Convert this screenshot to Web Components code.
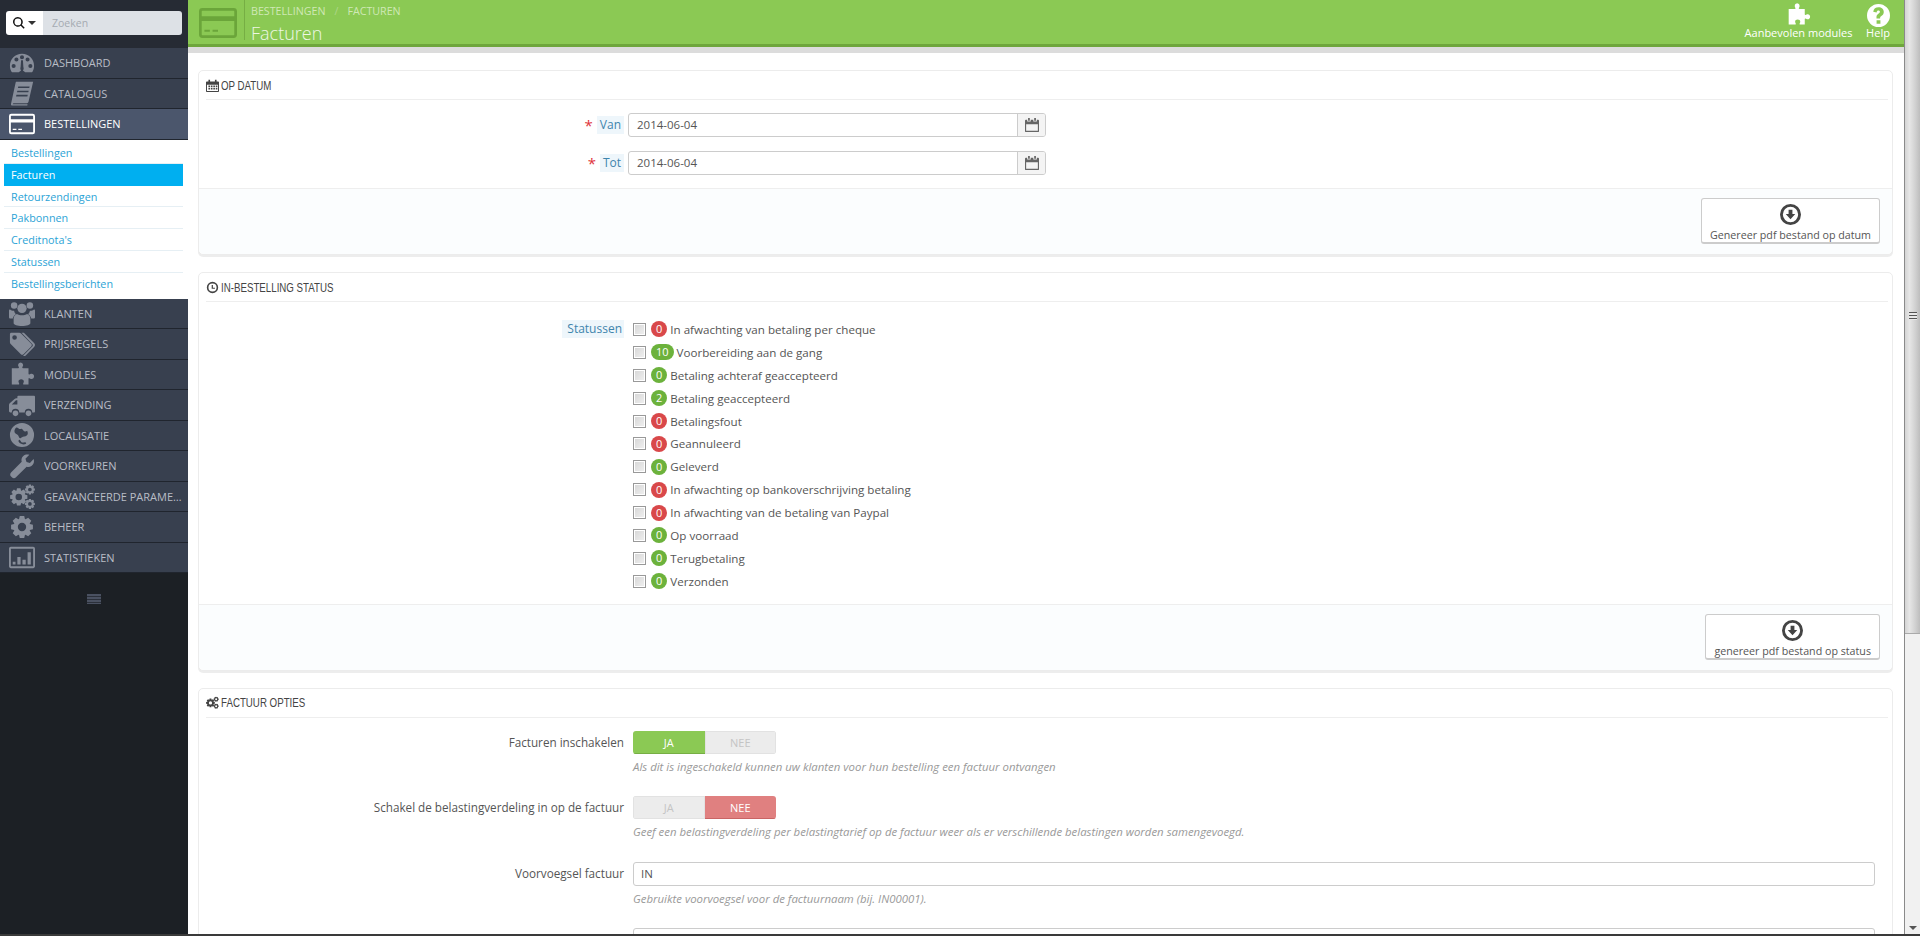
<!DOCTYPE html>
<html lang="nl">
<head>
<meta charset="utf-8">
<title>Facturen</title>
<style>
  html, body { margin: 0; height: 936px; overflow: hidden; background: #fff; }
  body { font-family: "Open Sans", "Liberation Sans", sans-serif; font-size: 12px; color: #555; }
  ps-page { height: 936px; }
</style>
</head>
<body>
<ps-page>
  <ps-sidebar slot="side">
    <ps-menu-item icon="dashboard">Dashboard</ps-menu-item>
    <ps-menu-item icon="book">Catalogus</ps-menu-item>
    <ps-menu-item icon="card" active>Bestellingen</ps-menu-item>
    <ps-submenu>
      <ps-sub-item>Bestellingen</ps-sub-item>
      <ps-sub-item active>Facturen</ps-sub-item>
      <ps-sub-item>Retourzendingen</ps-sub-item>
      <ps-sub-item>Pakbonnen</ps-sub-item>
      <ps-sub-item>Creditnota's</ps-sub-item>
      <ps-sub-item>Statussen</ps-sub-item>
      <ps-sub-item last>Bestellingsberichten</ps-sub-item>
    </ps-submenu>
    <ps-menu-item icon="users">Klanten</ps-menu-item>
    <ps-menu-item icon="tags">Prijsregels</ps-menu-item>
    <ps-menu-item icon="puzzle">Modules</ps-menu-item>
    <ps-menu-item icon="truck">Verzending</ps-menu-item>
    <ps-menu-item icon="globe">Localisatie</ps-menu-item>
    <ps-menu-item icon="wrench">Voorkeuren</ps-menu-item>
    <ps-menu-item icon="gears">Geavanceerde parameters</ps-menu-item>
    <ps-menu-item icon="gear">Beheer</ps-menu-item>
    <ps-menu-item icon="chart">Statistieken</ps-menu-item>
  </ps-sidebar>

  <ps-header></ps-header>

  <ps-panel heading="Op datum" icon="calendar" footer>
    <ps-date-row label="Van" value="2014-06-04"></ps-date-row>
    <ps-date-row label="Tot" value="2014-06-04" style="margin-top:14px"></ps-date-row>
    <ps-button slot="footer">Genereer pdf bestand op datum</ps-button>
  </ps-panel>

  <ps-panel heading="In-bestelling status" icon="clock" footer>
    <ps-status-list>
      <ps-status n="0" tone="red">In afwachting van betaling per cheque</ps-status>
      <ps-status n="10" tone="green">Voorbereiding aan de gang</ps-status>
      <ps-status n="0" tone="green">Betaling achteraf geaccepteerd</ps-status>
      <ps-status n="2" tone="green">Betaling geaccepteerd</ps-status>
      <ps-status n="0" tone="red">Betalingsfout</ps-status>
      <ps-status n="0" tone="red">Geannuleerd</ps-status>
      <ps-status n="0" tone="green">Geleverd</ps-status>
      <ps-status n="0" tone="red">In afwachting op bankoverschrijving betaling</ps-status>
      <ps-status n="0" tone="red">In afwachting van de betaling van Paypal</ps-status>
      <ps-status n="0" tone="green">Op voorraad</ps-status>
      <ps-status n="0" tone="green">Terugbetaling</ps-status>
      <ps-status n="0" tone="green">Verzonden</ps-status>
    </ps-status-list>
    <ps-button slot="footer">genereer pdf bestand op status</ps-button>
  </ps-panel>

  <ps-panel heading="Factuur opties" icon="cogs">
    <ps-form-row label="Facturen inschakelen" help="Als dit is ingeschakeld kunnen uw klanten voor hun bestelling een factuur ontvangen">
      <ps-switch value="yes"></ps-switch>
    </ps-form-row>
    <ps-form-row label="Schakel de belastingverdeling in op de factuur" help="Geef een belastingverdeling per belastingtarief op de factuur weer als er verschillende belastingen worden samengevoegd.">
      <ps-switch value="no"></ps-switch>
    </ps-form-row>
    <ps-form-row label="Voorvoegsel factuur" help="Gebruikte voorvoegsel voor de factuurnaam (bij. IN00001).">
      <ps-text-input value="IN"></ps-text-input>
    </ps-form-row>
    <ps-form-row label="">
      <ps-text-input value=""></ps-text-input>
    </ps-form-row>
  </ps-panel>
</ps-page>

<script>
// gear outline as a path, teeth alternate between outer and inner radius
function gearPath(cx, cy, r, teeth, hole) {
  let d = '';
  const step = Math.PI * 2 / teeth;
  for (let i = 0; i < teeth; i++) {
    const a = i * step;
    const pts = [[-.30, r * .76], [-.17, r], [.17, r], [.30, r * .76]];
    pts.forEach((p, j) => {
      const t = a + p[0] * step * 1.5;
      d += (i === 0 && j === 0 ? 'M' : 'L') + (cx + Math.cos(t) * p[1]).toFixed(2) + ' ' + (cy + Math.sin(t) * p[1]).toFixed(2);
    });
  }
  d += 'Z';
  d += `M${cx - hole} ${cy}a${hole} ${hole} 0 1 0 ${hole * 2} 0a${hole} ${hole} 0 1 0 ${-hole * 2} 0Z`;
  return d;
}

const PUZZLE = 'M12 1.500c2 0 3.200 1.300 3.200 2.900 0 1-.6 1.700-.9 2.500-.1.500.2.800.9.800H21v6c0 .7.400 1 .9.800.8-.3 1.400-.9 2.400-.9 1.600 0 2.700 1.200 2.700 2.900s-1.100 2.900-2.700 2.900c-1 0-1.600-.6-2.400-.9-.5-.2-.9.100-.9.800v6h-5c-.7 0-1-.4-.8-.9.3-.8.800-1.400.800-2.300 0-1.500-1.200-2.500-2.900-2.500s-2.900 1-2.900 2.500c0 .9.500 1.500.8 2.300.2.500-.1.900-.8.900H3V7.700h6.800c.7 0 1-.3.900-.8-.3-.8-.9-1.500-.9-2.500 0-1.600 1.200-2.900 3.200-2.900z';

const ICONS = {
  dashboard: `<path fill-rule="evenodd" d="M14 4C6.600 4 1 9.700 1 17c0 2.400.6 4.500 1.700 6.300.3.400.7.700 1.300.700h6.500l2.500-2c-.5-.5-.8-1.200-.8-2 0-.5.1-.9.3-1.300L13 11h2l.5 7.700c.2.400.3.800.3 1.300 0 .8-.3 1.500-.8 2l2.500 2H24c.6 0 1-.3 1.300-.7C26.400 21.500 27 19.400 27 17 27 9.700 21.400 4 14 4zM5 19.500a2.200 2.200 0 1 1 0-4.400 2.200 2.200 0 0 1 0 4.400zM8 12.500a2.200 2.200 0 1 1 0-4.400 2.200 2.200 0 0 1 0 4.400zM14 10a2.200 2.200 0 1 1 0-4.400A2.200 2.200 0 0 1 14 10zM20 12.500a2.200 2.200 0 1 1 0-4.400 2.200 2.200 0 0 1 0 4.400zM23 19.500a2.200 2.200 0 1 1 0-4.400 2.200 2.200 0 0 1 0 4.400z"/>`,
  book: `<path fill-rule="evenodd" d="M8 2h18l-5 21.500c-.2.900-.8 1.500-1.700 1.500H5.500c-.9 0-1.400.5-1.400 1H20l-.3 1.500H3.500C2.400 27.500 2 26.700 2.200 25.500L7 3.500C7.200 2.600 7.400 2 8 2zm2 5l-.4 1.700h12.200L22.200 7zm-1 4.500l-.4 1.700h12.200l.4-1.700zm-1 4.500l-.4 1.700h12.200l.4-1.700z"/>`,
  card: `<path fill-rule="evenodd" d="M2.500 3h23A2.500 2.500 0 0 1 28 5.500v17a2.500 2.500 0 0 1-2.500 2.500h-23A2.500 2.500 0 0 1 0 22.500v-17A2.500 2.500 0 0 1 2.500 3zM2 5.600V9h24V5.600c0-.4-.2-.6-.6-.6H2.600c-.4 0-.6.2-.6.600zM2 12.500v10c0 .3.200.5.500.5h23c.3 0 .5-.2.500-.5v-10zM4 19h4v1.500H4zm6 0h4v1.500h-4z"/>`,
  users: `<circle cx="5.500" cy="6" r="3.500"/><circle cx="22.500" cy="6" r="3.500"/><circle cx="14" cy="9" r="5"/><path d="M0 11.500c0-1 .8-1.500 1.500-1 .9.8 2.500 1.300 4 1.100.2 1.500 1 2.800 2 3.700-1.900 1-3.200 2.900-3.400 4.700H1.500C.6 20 0 19.400 0 18.500zM28 11.500c0-1-.8-1.500-1.500-1-.9.8-2.500 1.300-4 1.100-.2 1.500-1 2.800-2 3.700 1.900 1 3.200 2.900 3.400 4.700h2.600c.9 0 1.500-.6 1.500-1.500z"/><path d="M8.500 15c1.400 1 3.500 1.500 5.500 1.500s4.100-.5 5.500-1.500c2 .6 3.500 2.500 3.500 5v5c0 1.500-4 3-9 3s-9-1.500-9-3v-5c0-2.500 1.500-4.400 3.500-5z"/>`,
  tags: `<path fill-rule="evenodd" d="M1 3.500C1 2.700 1.700 2 2.500 2H11c.8 0 1.500.3 2 .8l11 11c.8.8.8 2 0 2.800L15.600 25c-.8.8-2 .8-2.800 0l-11-11c-.5-.5-.8-1.200-.8-2zM6 9.500a2.500 2.500 0 1 0 0-5 2.500 2.500 0 0 0 0 5z"/><path d="M16 2l11 11c1.300 1.300 1.300 3 0 4.300L18 26.300c-.8.800-2 .9-2.800.3L25 16.800c.8-.8.8-2 0-2.800L13.500 2z"/>`,
  puzzle: `<path d="${PUZZLE}"/>`,
  truck: `<path fill-rule="evenodd" d="M10 4h17c.6 0 1 .4 1 1v16c0 .6-.4 1-1 1h-2a4 4 0 0 0-8 0h-6a4 4 0 0 0-8 0H1.500C.7 22 0 21.300 0 20.500V14c0-.8.3-1.500.8-2L6 7.500c.5-.5 1.200-.8 2-.8h1V5c0-.6.4-1 1-1zM3 13.500h6V9H7.500z"/><circle cx="7" cy="23" r="3"/><circle cx="21" cy="23" r="3"/>`,
  globe: `<path fill-rule="evenodd" d="M14 1a13 13 0 1 1 0 26 13 13 0 0 1 0-26zM8 6c-1.500 1-2.500 3-2 5 .5 1.500 2 1.500 3.500 3 1 1 1 3 2.500 3.500 1 .3 1.500-1 3-1.500 2-.5 4-.5 5-2.500.6-1.500 0-3-.5-4-1 .8-2 1-3 .5S15 8 14 7.500c-1-.6-2 .5-3 0S9 5.500 8 6zM11 19c-1 .5-1 2 0 3s4 2.500 6 2c1.500-.4 2-1.500 1-2-1.500-.5-3 .5-4 0s-2-3-3-3z"/>`,
  wrench: `<path d="M26.500 6.500c.5 1.500.6 3 0 4.500-1.200 3-4.500 4.600-7.500 3.700L7.500 26.200c-1.200 1.200-3.200 1.200-4.400 0l-.9-.9c-1.200-1.200-1.200-3.200 0-4.400L13.700 9.400C12.800 6.400 14.400 3 17.400 1.900c1.500-.6 3-.5 4.500 0l-4.200 4.200 1.200 3.600 3.600 1.200z"/>`,
  gears: `<path fill-rule="evenodd" d="${gearPath(10.5, 15, 9.5, 8, 3.5)}"/><path fill-rule="evenodd" d="${gearPath(22.5, 7, 5.5, 8, 2)}"/><path fill-rule="evenodd" d="${gearPath(22.5, 22.5, 5.5, 8, 2)}"/>`,
  gear: `<path fill-rule="evenodd" d="${gearPath(14, 14, 12, 8, 4.5)}"/>`,
  chart: `<path fill-rule="evenodd" d="M2 3h24c1.100 0 2 .9 2 2v19c0 1.100-.9 2-2 2H2c-1.100 0-2-.9-2-2V5c0-1.100.9-2 2-2zm0 2v19h24V5zM4 19h3v3H4zm5-5h3.500v8H9zm5.500 3H18v5h-3.500zM20 9h3.500v13H20z"/>`,
  calendar: `<path fill-rule="evenodd" d="M3 1h2v2h6V1h2v2h2c.6 0 1 .4 1 1v11c0 .6-.4 1-1 1H1c-.6 0-1-.4-1-1V4c0-.6.4-1 1-1h2zM1.200 7v7.800h13.600V7zM3 8h2v2H3zm3 0h2v2H6zm3 0h2v2H9zm3 0h2v2h-2zM3 11h2v2H3zm3 0h2v2H6zm3 0h2v2H9zm3 0h2v2h-2z"/>`,
  calOutline: `<path fill-rule="evenodd" d="M3.500 0h2v3h-2zM10.500 0h2v3h-2zM1 2h1.500v2h4V2h3v2h4V2H15c.6 0 1 .4 1 1v12c0 .6-.4 1-1 1H1c-.6 0-1-.4-1-1V3c0-.6.4-1 1-1zm.3 5v7.700h13.400V7z"/>`,
  clock: `<path fill-rule="evenodd" d="M8 1a7 7 0 1 1 0 14A7 7 0 0 1 8 1zm0 2a5 5 0 1 0 0 10A5 5 0 0 0 8 3zM7 5h1.500v3.200h2.500v1.300H7z"/>`,
  cogs: `<path fill-rule="evenodd" d="${gearPath(5.5, 8.5, 5.5, 8, 2)}"/><path fill-rule="evenodd" d="${gearPath(12.5, 4, 3.2, 6, 1.2)}"/><path fill-rule="evenodd" d="${gearPath(12.5, 12.5, 3.2, 6, 1.2)}"/>`,
  download: `<path fill-rule="evenodd" d="M11 0a11 11 0 1 1 0 22A11 11 0 0 1 11 0zm0 3a8 8 0 1 0 0 16 8 8 0 0 0 0-16zM9 6h4v4.500h3L11 16l-5-5.500h3z"/>`,
  help: `<path fill-rule="evenodd" d="M12 0a12 12 0 1 1 0 24 12 12 0 0 1 0-24zm-2 17v3.500h4V17zM12 3.500c-3 0-5 1.500-5.500 4.500l3.500.8c.3-1.300.9-2 1.900-2 .9 0 1.600.6 1.600 1.400 0 .9-.7 1.400-1.600 2-1.400 1-2 1.900-2 3.600V15h3.800v-.7c0-.7.4-1 1.300-1.700C16.500 11.500 17.500 10.300 17.500 8.300c0-2.800-2.300-4.800-5.500-4.800z"/>`,
  search: `<path fill-rule="evenodd" d="M6.500 0a6.500 6.500 0 0 1 5.200 10.400l3.900 3.900-1.400 1.400-3.900-3.900A6.500 6.500 0 1 1 6.500 0zm0 2a4.500 4.500 0 1 0 0 9 4.500 4.500 0 0 0 0-9z"/>`,
};

function icon(name, w, h, vb) {
  return `<svg width="${w}" height="${h}" viewBox="${vb}" fill="currentColor" aria-hidden="true">${ICONS[name]}</svg>`;
}

class PsPage extends HTMLElement {
  connectedCallback() {
    this.attachShadow({ mode: 'open' });
    this.shadowRoot.innerHTML = `
      <style>
        :host { display: flex; height: 936px; overflow: hidden; position: relative; }
        .side { flex: 0 0 188px; }
        .main { flex: 1; min-width: 0; height: 936px; overflow: hidden; }
        .content { padding: 17px 11px 0 10px; }
        .line { position: absolute; left: 0; right: 0; bottom: 0; height: 2px; background: #3a3a3a; }
      </style>
      <div class="side"><slot name="side"></slot></div>
      <div class="main">
        <slot name="top"></slot>
        <div class="content"><slot></slot></div>
      </div>
      <ps-scrollbar></ps-scrollbar>
      <div class="line"></div>`;
    this.querySelector('ps-header').slot = 'top';
  }
}

class PsScrollbar extends HTMLElement {
  connectedCallback() {
    this.attachShadow({ mode: 'open' });
    this.shadowRoot.innerHTML = `
      <style>
        :host { display: block; flex: 0 0 16px; height: 936px; background: #f1f1f1; border-left: 1px solid #8a8a8a; box-sizing: border-box; position: relative; }
        .thumb { height: 634px; background: linear-gradient(90deg, #d4d4d4, #e6e6e6 30%, #d0d0d0 70%, #bdbdbd); display: flex; align-items: center; justify-content: center; border-bottom: 1px solid #aaa; box-sizing: border-box; }
        .grip { width: 8px; height: 8px; background: repeating-linear-gradient(#555 0 1px, #e8e8e8 1px 3px); margin-top: -1px; }
        .arrow { position: absolute; left: 4px; bottom: 6px; border: 4px solid transparent; border-top-color: #555; border-bottom: 0; }
      </style>
      <div class="thumb"><div class="grip"></div></div>
      <div class="arrow"></div>`;
  }
}

class PsSidebar extends HTMLElement {
  connectedCallback() {
    this.attachShadow({ mode: 'open' });
    this.shadowRoot.innerHTML = `
      <style>
        :host { display: flex; flex-direction: column; width: 188px; height: 936px; background: #1c2025; }
        .top { height: 48px; flex: none; background: #262b34; box-sizing: border-box; padding: 11px 6px 0; }
        .search { display: flex; height: 24px; border-radius: 3px; overflow: hidden; }
        .btn { flex: 0 0 37px; background: #fff; color: #111; display: flex; align-items: center; justify-content: center; gap: 3px; }
        .btn i { border: 4px solid transparent; border-top-color: #333; border-bottom: 0; }
        .field { flex: 1; background: #dde1e6; color: #a5abb2; font-size: 10.5px; line-height: 24px; padding-left: 9px; }
        .burger { margin: 21px auto 0; width: 14px; height: 10px; background: repeating-linear-gradient(#4a5161 0 2px, #2b303a 2px 3px); }
      </style>
      <div class="top">
        <div class="search">
          <div class="btn">${icon('search', 12, 12, '0 0 16 16')}<i></i></div>
          <div class="field">Zoeken</div>
        </div>
      </div>
      <slot></slot>
      <div class="burger"></div>`;
  }
}

class PsMenuItem extends HTMLElement {
  connectedCallback() {
    const on = this.hasAttribute('active');
    this.attachShadow({ mode: 'open' });
    this.shadowRoot.innerHTML = `
      <style>
        :host { display: flex; align-items: center; flex: none; height: 30.5px; box-sizing: border-box;
          background: ${on ? '#4b566c' : '#38404f'}; border-bottom: 1px solid #20252e;
          color: ${on ? '#fff' : '#b8bdc6'}; }
        .ico { flex: 0 0 44px; display: flex; justify-content: center; color: ${on ? '#fff' : '#878d99'}; }
        .txt { flex: 1; min-width: 0; padding-right: 5px; font-size: 11px; text-transform: uppercase; white-space: nowrap; overflow: hidden; text-overflow: ellipsis; }
      </style>
      <span class="ico">${icon(this.getAttribute('icon'), 26, 26, '0 0 28 28')}</span>
      <span class="txt"><slot></slot></span>`;
  }
}

class PsSubmenu extends HTMLElement {
  connectedCallback() {
    this.attachShadow({ mode: 'open' });
    this.shadowRoot.innerHTML = `
      <style>:host { display: block; flex: none; background: #fff; padding: 2.5px 5px 1px 4px; height: 159px; box-sizing: border-box; }</style>
      <slot></slot>`;
  }
}

class PsSubItem extends HTMLElement {
  connectedCallback() {
    const on = this.hasAttribute('active');
    const last = this.hasAttribute('last');
    this.attachShadow({ mode: 'open' });
    this.shadowRoot.innerHTML = `
      <style>
        :host { display: block; height: 21.8px; line-height: 21px; box-sizing: border-box; padding-left: 7px; font-size: 10.8px;
          color: ${on ? '#fff' : '#2ba3d6'}; background: ${on ? '#00aff0' : 'transparent'};
          border-bottom: 1px solid ${on || last ? 'transparent' : '#e6eff4'}; }
      </style>
      <slot></slot>`;
  }
}

class PsHeader extends HTMLElement {
  connectedCallback() {
    this.attachShadow({ mode: 'open' });
    this.shadowRoot.innerHTML = `
      <style>
        :host { display: block; height: 53px; box-sizing: border-box; border-bottom: 6px solid #dcdcdc; color: #fff; }
        .bar { height: 47px; box-sizing: border-box; background: #8bc954; border-bottom: 3px solid #6ea63c; display: flex; padding-left: 10px; }
        .logo { flex: 0 0 40px; color: #6ba53a; padding-top: 4px; }
        .titles { margin-left: 6px; border-left: 1px solid #76ae44; padding-left: 6px; height: 40px; flex: 1; }
        .crumb { font-size: 10.7px; line-height: 14px; padding-top: 4px; color: #cfe8b6; text-transform: uppercase; display: flex; gap: 9px; }
        .crumb span { color: #aed68a; }
        h2 { margin: 3px 0 0; font-weight: 300; font-size: 18px; line-height: 24px; color: #eef7e4; }
        .act { width: 113px; text-align: center; font-size: 11px; line-height: 14px; padding-top: 2px; margin-right: 4px; }
        .act.help { width: 38px; margin-right: 7px; }
        .act div { height: 24px; display: flex; justify-content: center; }
        .act.help svg { margin-top: 2px; }
      </style>
      <div class="bar">
        <div class="logo">${icon('card', 40, 38, '0 0 28 28')}</div>
        <div class="titles">
          <div class="crumb">Bestellingen <span>/</span> Facturen</div>
          <h2>Facturen</h2>
        </div>
        <div class="act"><div>${icon('puzzle', 25, 25, '0 0 28 28')}</div>Aanbevolen modules</div>
        <div class="act help"><div>${icon('help', 23, 23, '0 0 24 24')}</div>Help</div>
      </div>`;
  }
}

class PsPanel extends HTMLElement {
  connectedCallback() {
    const ic = this.getAttribute('icon');
    const hasFoot = this.hasAttribute('footer');
    this.attachShadow({ mode: 'open' });
    this.shadowRoot.innerHTML = `
      <style>
        :host { display: block; margin-bottom: 17px; background: #fff; border: 1px solid #ececec; border-radius: 5px; box-shadow: 0 2px 0 rgba(0,0,0,.07); box-sizing: border-box; }
        .head { height: 28px; margin: 0 4px 0 7px; border-bottom: 1px solid #eee; display: flex; align-items: center; gap: 2px; color: #444;
          font-family: "Liberation Sans", sans-serif; font-size: 13.5px; text-transform: uppercase; }
        .head span { display: inline-block; white-space: nowrap; transform: scaleX(.72); transform-origin: left center; }
        .body { padding: 13px 0 13px; }
        .foot { display: ${hasFoot ? 'flex' : 'none'}; justify-content: flex-end; align-items: flex-start; height: 66px; box-sizing: border-box; padding: 9px 12px 0 0; background: #fbfdfe; border-top: 1px solid #eee; border-radius: 0 0 5px 5px; }
      </style>
      <div class="head">${icon(ic, 13, 13, '0 0 16 16')}<span>${this.getAttribute('heading')}</span></div>
      <div class="body"><slot></slot></div>
      <div class="foot"><slot name="footer"></slot></div>`;
  }
}

class PsDateRow extends HTMLElement {
  connectedCallback() {
    const label = this.getAttribute('label');
    this.attachShadow({ mode: 'open' });
    this.shadowRoot.innerHTML = `
      <style>
        :host { display: grid; grid-template-columns: 425px 418px; column-gap: 4px; align-items: center; height: 24px; }
        .lab { display: flex; justify-content: flex-end; align-items: center; gap: 4px; font-size: 12px; }
        .req { color: #e0333c; font-size: 15px; line-height: 12px; }
        .txt { background: #eef6fb; color: #3f85ad; padding: 0 3px; line-height: 18px; }
        .box { display: flex; height: 24px; box-sizing: border-box; border: 1px solid #ccc; border-radius: 3px; }
        .val { flex: 1; padding-left: 8px; font-size: 11.5px; line-height: 22px; color: #555; }
        .add { flex: 0 0 27px; border-left: 1px solid #ccc; background: #f4f4f4; color: #666; display: flex; align-items: center; justify-content: center; border-radius: 0 2px 2px 0; }
      </style>
      <div class="lab"><span class="req">*</span><span class="txt">${label}</span></div>
      <div class="box"><div class="val">${this.getAttribute('value')}</div><div class="add">${icon('calOutline', 14, 14, '0 0 16 16')}</div></div>`;
  }
}

class PsStatusList extends HTMLElement {
  connectedCallback() {
    this.attachShadow({ mode: 'open' });
    this.shadowRoot.innerHTML = `
      <style>
        :host { display: grid; grid-template-columns: 425px 1fr; column-gap: 9px; padding-top: 3px; margin-bottom: -2px; }
        .lab { justify-self: end; align-self: start; background: #eef6fb; color: #3f85ad; font-size: 12px; line-height: 18px; padding: 0 2px 0 5px; margin-top: 2px; }
      </style>
      <div class="lab">Statussen</div>
      <div><slot></slot></div>`;
  }
}

class PsStatus extends HTMLElement {
  connectedCallback() {
    const red = this.getAttribute('tone') === 'red';
    this.attachShadow({ mode: 'open' });
    this.shadowRoot.innerHTML = `
      <style>
        :host { display: flex; align-items: center; height: 22.9px; font-size: 11.6px; color: #555; }
        input { appearance: none; margin: 0 5px 0 0; width: 13px; height: 13px; box-sizing: border-box; border: 1px solid #999; background: linear-gradient(135deg, #d6d6d6, #f0f0f0); box-shadow: inset 0 0 0 1px #fff; }
        .n { min-width: 16px; height: 16px; box-sizing: border-box; padding: 0 5px; border-radius: 8px; color: #fff; font-size: 11px; line-height: 16px; text-align: center; margin-right: 3px; background: ${red ? '#d9484a' : '#6cb23c'}; }
      </style>
      <input type="checkbox"><span class="n">${this.getAttribute('n')}</span><slot></slot>`;
  }
}

class PsFormRow extends HTMLElement {
  connectedCallback() {
    const help = this.getAttribute('help');
    this.attachShadow({ mode: 'open' });
    this.shadowRoot.innerHTML = `
      <style>
        :host { display: grid; grid-template-columns: 425px 1fr; column-gap: 9px; margin-bottom: 21.5px; }
        .lab { text-align: right; font-size: 11.7px; line-height: 23px; color: #555; }
        .help { margin-top: 5px; font-size: 11.4px; line-height: 16px; font-style: italic; color: #999; }
        .ctl { padding-right: 17px; }
      </style>
      <div class="lab">${this.getAttribute('label')}</div>
      <div class="ctl"><slot></slot>${help ? `<div class="help">${help}</div>` : ''}</div>`;
  }
}

class PsSwitch extends HTMLElement {
  connectedCallback() {
    const yes = this.getAttribute('value') === 'yes';
    this.attachShadow({ mode: 'open' });
    this.shadowRoot.innerHTML = `
      <style>
        :host { display: flex; width: 143px; height: 23px; border-radius: 3px; overflow: hidden; font-size: 11px; line-height: 23px; text-align: center; }
        div { flex: 1; }
        .off { background: #ececec; color: #c4c4c4; box-shadow: inset 0 0 0 1px #e2e2e2; }
        .ja { background: #8bc954; color: #fff; box-shadow: inset 0 -1px 0 #76ae44; }
        .nee { background: #e08080; color: #fff; box-shadow: inset 0 -1px 0 #c96464; }
      </style>
      <div class="${yes ? 'ja' : 'off'}">JA</div>
      <div class="${yes ? 'off' : 'nee'}">NEE</div>`;
  }
}

class PsTextInput extends HTMLElement {
  connectedCallback() {
    this.attachShadow({ mode: 'open' });
    this.shadowRoot.innerHTML = `
      <style>
        :host { display: block; height: 24px; box-sizing: border-box; border: 1px solid #ccc; border-radius: 3px; padding-left: 7px; font-size: 11.5px; line-height: 22px; color: #555; background: #fff; }
      </style>
      ${this.getAttribute('value')}`;
  }
}

class PsButton extends HTMLElement {
  connectedCallback() {
    this.attachShadow({ mode: 'open' });
    this.shadowRoot.innerHTML = `
      <style>
        :host { display: flex; flex-direction: column; align-items: center; box-sizing: border-box; height: 46px; padding: 5px 8px 0; background: #fff; border: 1px solid #ccc; border-bottom-width: 2px; border-radius: 3px; color: #555; font-size: 10.7px; line-height: 16px; white-space: nowrap; }
        span { height: 22px; margin-bottom: 1px; color: #444; }
      </style>
      <span>${icon('download', 21, 21, '0 0 22 22')}</span>
      <slot></slot>`;
  }
}

customElements.define('ps-scrollbar', PsScrollbar);
customElements.define('ps-page', PsPage);
customElements.define('ps-sidebar', PsSidebar);
customElements.define('ps-menu-item', PsMenuItem);
customElements.define('ps-submenu', PsSubmenu);
customElements.define('ps-sub-item', PsSubItem);
customElements.define('ps-header', PsHeader);
customElements.define('ps-panel', PsPanel);
customElements.define('ps-date-row', PsDateRow);
customElements.define('ps-status-list', PsStatusList);
customElements.define('ps-status', PsStatus);
customElements.define('ps-form-row', PsFormRow);
customElements.define('ps-switch', PsSwitch);
customElements.define('ps-text-input', PsTextInput);
customElements.define('ps-button', PsButton);
</script>
</body>
</html>
